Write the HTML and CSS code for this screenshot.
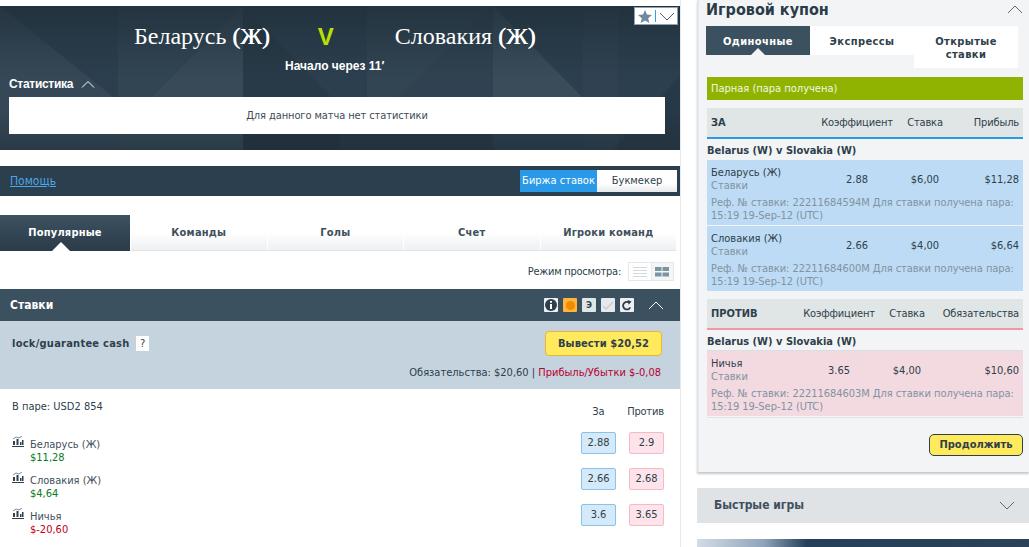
FILE: index.html
```html
<!DOCTYPE html>
<html lang="ru">
<head>
    <meta charset="UTF-8">
    <title>Беларусь (Ж) v Словакия (Ж)</title>
    <link rel="stylesheet" href="styles.css">
</head>
<body>

<div class="page">
    <div class="main">
        <div class="hero">
            <svg class="hero-bg" width="680" height="144" viewBox="0 0 680 144">
                <defs>
                    <linearGradient id="hero-shade" x1="0" y1="0" x2="0" y2="1">
                        <stop offset="0" stop-color="#1f2e3a" stop-opacity=".75"/>
                        <stop offset=".5" stop-color="#1f2e3a" stop-opacity="0"/>
                        <stop offset=".72" stop-color="#1f2e3a" stop-opacity="0"/>
                        <stop offset="1" stop-color="#1f2e3a" stop-opacity=".55"/>
                    </linearGradient>
                </defs>
                <rect width="680" height="144" fill="#2c3f4e"/>
                <polygon points="0,0 118,95 118,144 0,144" fill="#fff" opacity=".05"/>
                <polygon points="118,0 243,0 118,125" fill="#fff" opacity=".03"/>
                <polygon points="118,125 243,0 243,144 118,144" fill="#fff" opacity=".06"/>
                <polygon points="243,0 340,100 340,144 243,144" fill="#000" opacity=".08"/>
                <polygon points="367,0 493,0 397,92 367,120" fill="#fff" opacity=".03"/>
                <polygon points="397,92 493,0 493,92" fill="#fff" opacity=".02"/>
                <polygon points="493,0 583,92 493,92" fill="#fff" opacity=".07"/>
                <polygon points="583,0 618,0 618,144 583,144" fill="#fff" opacity=".02"/>
                <polygon points="680,70 680,144 612,144" fill="#000" opacity=".1"/>
                <rect x="243" y="128" width="250" height="16" fill="#000" opacity=".12"/>
                <rect width="680" height="144" fill="url(#hero-shade)"/>
            </svg>
            <div class="fav">
                <svg width="14" height="13" viewBox="0 0 14 13"><polygon points="7,0 9,4.6 14,5 10.2,8.2 11.4,13 7,10.4 2.6,13 3.8,8.2 0,5 5,4.6" fill="#6f8a9e"/></svg>
                <span class="fav-sep"></span>
                <svg width="16" height="9" viewBox="0 0 16 9"><path d="M1 1l7 7 7-7" fill="none" stroke="#4d6373" stroke-width="1"/></svg>
            </div>
            <div class="teams">
                <span class="team">Беларусь <span class="team-w">(Ж)</span></span>
                <span class="versus">V</span>
                <span class="team">Словакия <span class="team-w">(Ж)</span></span>
            </div>
            <div class="start-time">Начало через 11′</div>
            <div class="stats-head">
                Статистика
                <svg width="14" height="8" viewBox="0 0 14 8"><path d="M1 7.5l6-6 6 6" fill="none" stroke="#fff" stroke-width="1"/></svg>
            </div>
            <div class="stats-box">Для данного матча нет статистики</div>
        </div>

        <div class="help-bar">
            <a class="help-link" href="#">Помощь</a>
            <div class="switch">
                <span class="switch-on">Биржа ставок</span>
                <span class="switch-off">Букмекер</span>
            </div>
        </div>

        <div class="tabs">
            <div class="tab tab-active">Популярные</div>
            <div class="tab">Команды</div>
            <div class="tab">Голы</div>
            <div class="tab">Счет</div>
            <div class="tab">Игроки команд</div>
        </div>

        <div class="view-mode">
            <span>Режим просмотра:</span>
            <div class="view-icons">
                <span class="view-cell">
                    <svg width="14" height="10" viewBox="0 0 14 10"><path d="M0 .5h14M0 3.500h14M0 6.500h14M0 9.500h14" stroke="#d3d9dd" stroke-width="1"/></svg>
                </span>
                <span class="view-cell view-cell-on">
                    <svg width="14" height="10" viewBox="0 0 14 10"><path d="M0 0h6.500v4H0zM7.500 0h6.500v4H7.500zM0 5.500h6.500v4H0zM7.500 5.500h6.500v4H7.500z" fill="#7b94a4"/></svg>
                </span>
            </div>
        </div>

        <div class="bets-head">
            <span>Ставки</span>
            <div class="bets-tools">
                <span class="tool">
                    <svg width="12" height="12" viewBox="0 0 12 12"><circle cx="6" cy="6" r="6" fill="#2e3f4b"/><path d="M5 2h2v1.800H5zM5 5h2v5H5z" fill="#fff"/></svg>
                </span>
                <span class="tool tool-orange"><span class="tool-dot"></span></span>
                <span class="tool tool-e">Э</span>
                <span class="tool tool-pale">
                    <svg width="12" height="9" viewBox="0 0 12 9"><path d="M1 5l3 3 7-7" fill="none" stroke="#c4cdd3" stroke-width="1.400"/></svg>
                </span>
                <span class="tool">
                    <svg width="10" height="11" viewBox="0 0 10 11"><path d="M8.300 7.400A3.800 3.800 0 1 1 7.200 2.600" fill="none" stroke="#2e3f4b" stroke-width="1.800"/><polygon points="5.600,0 9.600,1.400 6.600,4.800" fill="#2e3f4b"/></svg>
                </span>
                <svg class="tools-chevron" width="16" height="9" viewBox="0 0 16 9"><path d="M1 8l7-7 7 7" fill="none" stroke="#fff" stroke-width="1"/></svg>
            </div>
        </div>

        <div class="cash">
            <div class="cash-top">
                <div class="cash-title">lock/guarantee cash <span class="hint">?</span></div>
                <div class="cash-btn">Вывести $20,52</div>
            </div>
            <div class="cash-sum">Обязательства: $20,60 | <span class="loss">Прибыль/Убытки $-0,08</span></div>
        </div>

        <div class="market">
            <div class="market-head">
                <div class="matched">В паре: USD2 854</div>
                <div class="odds-labels">
                    <span class="odds-label">За</span>
                    <span class="odds-label odds-label-lay">Против</span>
                </div>
            </div>
            <div class="runner">
                <svg class="runner-icon" width="12" height="11" viewBox="0 0 12 11"><path d="M1 5h2v4H1zM4.500 3h2v6h-2zM8 6h1.500v3H8zM10 4h1.500v5H10zM0 10h12v1H0z" fill="#2e3f4b"/><path d="M1 3l3-2 3 1 3-2" fill="none" stroke="#5d6f7c" stroke-width=".8"/></svg>
                <div class="runner-info">
                    <div>Беларусь (Ж)</div>
                    <div class="gain">$11,28</div>
                </div>
                <span class="odd odd-back">2.88</span>
                <span class="odd odd-lay">2.9</span>
            </div>
            <div class="runner">
                <svg class="runner-icon" width="12" height="11" viewBox="0 0 12 11"><path d="M1 5h2v4H1zM4.500 3h2v6h-2zM8 6h1.500v3H8zM10 4h1.500v5H10zM0 10h12v1H0z" fill="#2e3f4b"/><path d="M1 3l3-2 3 1 3-2" fill="none" stroke="#5d6f7c" stroke-width=".8"/></svg>
                <div class="runner-info">
                    <div>Словакия (Ж)</div>
                    <div class="gain">$4,64</div>
                </div>
                <span class="odd odd-back">2.66</span>
                <span class="odd odd-lay">2.68</span>
            </div>
            <div class="runner">
                <svg class="runner-icon" width="12" height="11" viewBox="0 0 12 11"><path d="M1 5h2v4H1zM4.500 3h2v6h-2zM8 6h1.500v3H8zM10 4h1.500v5H10zM0 10h12v1H0z" fill="#2e3f4b"/><path d="M1 3l3-2 3 1 3-2" fill="none" stroke="#5d6f7c" stroke-width=".8"/></svg>
                <div class="runner-info">
                    <div>Ничья</div>
                    <div class="lose">$-20,60</div>
                </div>
                <span class="odd odd-back">3.6</span>
                <span class="odd odd-lay">3.65</span>
            </div>
        </div>
    </div>

    <div class="side">
        <div class="slip">
            <div class="slip-title">
                <span>Игровой купон</span>
                <svg width="16" height="9" viewBox="0 0 16 9"><path d="M1 8l7-7 7 7" fill="none" stroke="#5b6c78" stroke-width="1"/></svg>
            </div>
            <div class="slip-tabs">
                <div class="slip-tab slip-tab-active">Одиночные</div>
                <div class="slip-tab">Экспрессы</div>
                <div class="slip-tab slip-tab-tall">Открытые ставки</div>
            </div>
            <div class="status">Парная (пара получена)</div>

            <div class="bet-head bet-head-back cols-back">
                <b>ЗА</b>
                <span class="c">Коэффициент</span>
                <span class="c">Ставка</span>
                <span class="r">Прибыль</span>
            </div>
            <div class="bet-market">Belarus (W) v Slovakia (W)</div>
            <div class="bet bet-back">
                <div class="cols-back">
                    <div>Беларусь (Ж)<div class="muted">Ставки</div></div>
                    <span class="c">2.88</span>
                    <span class="c">$6,00</span>
                    <span class="r">$11,28</span>
                </div>
                <div class="ref">Реф. № ставки: 22211684594M Для ставки получена пара: 15:19 19-Sep-12 (UTC)</div>
            </div>
            <div class="bet bet-back bet-next">
                <div class="cols-back">
                    <div>Словакия (Ж)<div class="muted">Ставки</div></div>
                    <span class="c">2.66</span>
                    <span class="c">$4,00</span>
                    <span class="r">$6,64</span>
                </div>
                <div class="ref">Реф. № ставки: 22211684600M Для ставки получена пара: 15:19 19-Sep-12 (UTC)</div>
            </div>

            <div class="bet-head bet-head-lay cols-lay">
                <b>ПРОТИВ</b>
                <span class="c">Коэффициент</span>
                <span class="c">Ставка</span>
                <span class="r">Обязательства</span>
            </div>
            <div class="bet-market">Belarus (W) v Slovakia (W)</div>
            <div class="bet bet-lay">
                <div class="cols-lay">
                    <div>Ничья<div class="muted">Ставки</div></div>
                    <span class="c">3.65</span>
                    <span class="c">$4,00</span>
                    <span class="r">$10,60</span>
                </div>
                <div class="ref">Реф. № ставки: 22211684603M Для ставки получена пара: 15:19 19-Sep-12 (UTC)</div>
            </div>
            <div class="slip-foot">
                <div class="next-btn">Продолжить</div>
            </div>
        </div>

        <div class="quick">
            <span>Быстрые игры</span>
            <svg width="16" height="9" viewBox="0 0 16 9"><path d="M1 1l7 7 7-7" fill="none" stroke="#5b6c78" stroke-width="1"/></svg>
        </div>
        <div class="promo"></div>
    </div>
</div>

</body>
</html>
```

FILE: styles.css
```css
html, body {
    height: 547px;
    overflow: hidden;
}
body {
    margin: 0;
    background-color: #fff;
    font-family: "DejaVu Sans", Arial, sans-serif;
    font-stretch: condensed;
    font-size: 11px;
    line-height: 13px;
    color: #2e3f4b;
}

.page {
    display: flex;
    align-items: flex-start;
}
.main {
    width: 680px;
    padding-top: 6px;
    border-right: 1px solid #e8ebed;
    height: 541px;
    flex-shrink: 0;
}
.side {
    width: 332px;
    margin-left: 16px;
    flex-shrink: 0;
}

/* hero */
.hero {
    position: relative;
    height: 144px;
    overflow: hidden;
    color: #fff;
}
.hero-bg {
    position: absolute;
    left: 0;
    top: 0;
}
.hero > div {
    position: relative;
}
.hero > .fav {
    position: absolute;
    top: 1px;
    right: 2px;
    width: 44px;
    height: 18px;
    box-sizing: border-box;
    display: flex;
    align-items: center;
    justify-content: center;
    gap: 3px;
    background-color: #fff;
    border: 1px solid #8fa3b3;
}
.fav-sep {
    width: 1px;
    height: 12px;
    background-color: #3d9be0;
}
.teams {
    display: flex;
    align-items: center;
    height: 30px;
    padding: 15px 0 0 134px;
    font-family: "Liberation Serif", serif;
    font-size: 24px;
}
.team-w {
    text-shadow: .4px 0 #fff;
}
.versus {
    margin: 0 61px 0 48px;
    font-family: "Liberation Sans", Arial, sans-serif;
    font-weight: bold;
    color: #b9e000;
}
.start-time {
    margin-top: 8px;
    margin-left: 285px;
    font-family: "Liberation Sans", Arial, sans-serif;
    font-size: 12px;
    line-height: 14px;
    font-weight: bold;
}
.stats-head {
    display: flex;
    align-items: center;
    gap: 8px;
    margin: 3px 0 0 9px;
    height: 16px;
    font-family: "Liberation Sans", Arial, sans-serif;
    font-size: 12px;
    font-weight: bold;
    letter-spacing: -.3px;
}
.stats-box {
    margin: 5px 15px 0 9px;
    height: 37px;
    line-height: 37px;
    text-align: center;
    background-color: #fff;
    color: #3d4c57;
    letter-spacing: -.1px;
}

/* help bar */
.help-bar {
    display: flex;
    align-items: center;
    justify-content: space-between;
    height: 30px;
    margin-top: 16px;
    padding: 0 3px 0 10px;
    background-color: #2b3f4e;
}
.help-link {
    font-size: 12px;
    color: #4ea6e6;
}
.switch {
    display: flex;
    height: 22px;
    line-height: 22px;
    text-align: center;
}
.switch-on {
    width: 77px;
    background-color: #2a9ae8;
    color: #fff;
}
.switch-off {
    width: 80px;
    background-image: linear-gradient(#fff 60%, #e6e9eb);
    color: #2e3f4b;
}

/* market tabs */
.tabs {
    display: flex;
    margin-top: 19px;
    height: 36px;
    width: 676px;
    box-shadow: inset 0 1px 0 #eceff0, inset -1px 0 0 #eceff0;
}
.tab {
    position: relative;
    flex: 1;
    line-height: 36px;
    text-align: center;
    font-weight: bold;
    letter-spacing: .2px;
    color: #3f505c;
    border-left: 1px solid #fff;
    border-bottom: 1px solid #dfe3e6;
    box-sizing: border-box;
    background-image: linear-gradient(#fff 50%, #eef0f1);
}
.tab-active {
    flex: none;
    width: 130px;
    color: #fff;
    border: 0;
    background-image: linear-gradient(#3c5160, #2a3b49);
}
.tab-active::after {
    content: "";
    position: absolute;
    left: 52px;
    bottom: 0;
    border: 9px solid transparent;
    border-top: 0;
    border-bottom-color: #fff;
}

/* view mode */
.view-mode {
    display: flex;
    align-items: center;
    justify-content: flex-end;
    gap: 7px;
    height: 19px;
    margin-top: 11px;
    padding-right: 6px;
    letter-spacing: -.25px;
}
.view-icons {
    display: flex;
    border: 1px solid #e4e8ea;
    height: 17px;
}
.view-cell {
    display: flex;
    align-items: center;
    justify-content: center;
    width: 21.500px;
}
.view-cell-on {
    background-color: #f3f5f6;
    border-left: 1px solid #e4e8ea;
}

/* bets */
.bets-head {
    display: flex;
    align-items: center;
    justify-content: space-between;
    height: 32px;
    margin-top: 8px;
    padding: 0 16px 0 10px;
    background-color: #3c5160;
    color: #fff;
    font-size: 12px;
    font-weight: bold;
}
.bets-tools {
    display: flex;
    align-items: center;
    gap: 5px;
}
.tool {
    display: flex;
    align-items: center;
    justify-content: center;
    width: 14px;
    height: 14px;
    border-radius: 1px;
    background-color: #edf0f2;
    color: #2e3f4b;
    font-size: 10px;
    font-weight: normal;
}
.tool-orange {
    background-color: #ffb53c;
}
.tool-dot {
    width: 9px;
    height: 9px;
    border-radius: 50%;
    background-color: #f58a00;
}
.tool-e {
    font-size: 9px;
    font-weight: bold;
    background-color: #dfe6e8;
}
.tool-pale {
    background-color: #e6eaec;
}
.tools-chevron {
    margin-left: 9px;
}
.cash {
    height: 68px;
    padding: 10px 18px 0 12px;
    box-sizing: border-box;
    background-color: #c5d3df;
}
.cash-top {
    display: flex;
    align-items: center;
    justify-content: space-between;
}
.cash-title {
    font-weight: bold;
    letter-spacing: .25px;
}
.hint {
    display: inline-block;
    width: 13px;
    height: 15px;
    line-height: 15px;
    margin-left: 3px;
    text-align: center;
    font-weight: normal;
    background-color: #fff;
    vertical-align: middle;
}
.cash-btn {
    width: 115px;
    height: 23px;
    line-height: 23px;
    text-align: center;
    font-weight: bold;
    letter-spacing: .1px;
    background-color: #ffe95c;
    border: 1px solid #e8b735;
    border-radius: 4px;
}
.cash-sum {
    margin-top: 10px;
    padding-right: 1px;
    text-align: right;
}
.loss {
    color: #b8002e;
}

/* runners */
.market {
    padding: 11px 16px 0 12px;
}
.market-head {
    display: flex;
    justify-content: space-between;
    height: 32px;
}
.odds-labels {
    display: flex;
    gap: 11px;
    padding-top: 5px;
}
.odds-label {
    width: 35px;
    text-align: center;
}
.odds-label-lay {
    width: 37px;
    letter-spacing: -.2px;
}
.runner {
    display: flex;
    height: 36px;
}
.runner-icon {
    margin: 4px 6px 0 0;
    flex-shrink: 0;
}
.runner-info {
    flex: 1;
    padding-top: 6px;
    color: #3f505c;
}
.gain {
    color: #0a7a1e;
}
.lose {
    color: #c00020;
}
.odd {
    width: 33px;
    height: 20px;
    line-height: 20px;
    text-align: center;
    border-radius: 2px;
}
.odd-back {
    background-color: #d5e9f8;
    border: 1px solid #86c3ee;
    margin-right: 13px;
}
.odd-lay {
    background-color: #fde3ea;
    border: 1px solid #f6b9c8;
}

/* bet slip */
.slip {
    height: 472px;
    box-sizing: border-box;
    padding: 0 6px 0 8px;
    background-color: #f3f4f6;
    border-left: 2px solid #e4e7e9;
    box-shadow: 0 2px 2px #c4c9cc;
}
.slip-title {
    display: flex;
    align-items: center;
    justify-content: space-between;
    height: 18px;
    margin-left: -1px;
    font-size: 16px;
    font-weight: bold;
    color: #2b3c49;
}
.slip-tabs {
    display: flex;
    align-items: flex-start;
    margin-top: 8px;
    margin-left: -1px;
    width: 312px;
}
.slip-tab {
    flex: 1;
    padding: 9px 0 7px;
    text-align: center;
    font-weight: bold;
    background-color: #fff;
    letter-spacing: .4px;
}
.slip-tab-active {
    position: relative;
    color: #fff;
    background-color: #3c5160;
}
.slip-tab-active::after {
    content: "";
    position: absolute;
    left: 45px;
    bottom: 0;
    border: 7px solid transparent;
    border-top: 0;
    border-bottom-color: #f3f4f6;
}
.status {
    height: 23px;
    line-height: 23px;
    margin-top: 9px;
    padding-left: 4px;
    background-color: #8fb300;
    color: #f3f7e0;
}
.cols-back,
.cols-lay {
    display: grid;
    align-items: center;
}
.cols-back {
    grid-template-columns: 110px 72px 64px 1fr;
}
.cols-lay {
    grid-template-columns: 92px 72px 64px 1fr;
}
.c {
    text-align: center;
}
.r {
    text-align: right;
}
.bet-head {
    height: 29px;
    margin-top: 8px;
    padding: 0 4px;
    background-color: #e0e5e6;
    letter-spacing: -.15px;
}
.bet-head b {
    letter-spacing: 0;
}
.bet-head-back {
    border-bottom: 2px solid #2a9ae8;
}
.bet-head-lay {
    border-bottom: 2px solid #f397a8;
}
.bet-market {
    height: 21px;
    line-height: 24px;
    font-weight: bold;
}
.bet {
    padding: 6px 4px 4px;
    height: 65px;
    box-sizing: border-box;
}
.bet-back {
    background-color: #bddbf4;
}
.bet-next {
    margin-top: 1px;
}
.bet-lay {
    background-color: #f3dae0;
    box-shadow: 0 -1px 0 #d5dfe8, 0 1px 0 #f3f4f6, 0 2px 0 #dfe5ea;
}
.muted {
    color: #8193a1;
}
.ref {
    margin-top: 4px;
    color: #8193a1;
    letter-spacing: -.05px;
}
.slip-foot {
    display: flex;
    justify-content: flex-end;
    margin-top: 18px;
}
.next-btn {
    width: 92px;
    height: 20px;
    line-height: 20px;
    text-align: center;
    font-weight: bold;
    background-color: #ffe95c;
    border: 1px solid #2e3f4b;
    border-radius: 5px;
}

.quick {
    display: flex;
    align-items: center;
    justify-content: space-between;
    height: 35px;
    margin-top: 16px;
    padding: 0 14px 0 17px;
    background-color: #dfe3e6;
    font-size: 12px;
    font-weight: bold;
    color: #3f505c;
}
.promo {
    height: 8px;
    margin-top: 16px;
    background-image: linear-gradient(90deg, #d3dce6, #8fa5bb 20%, #24405a 33%, #2b4258);
}
```
